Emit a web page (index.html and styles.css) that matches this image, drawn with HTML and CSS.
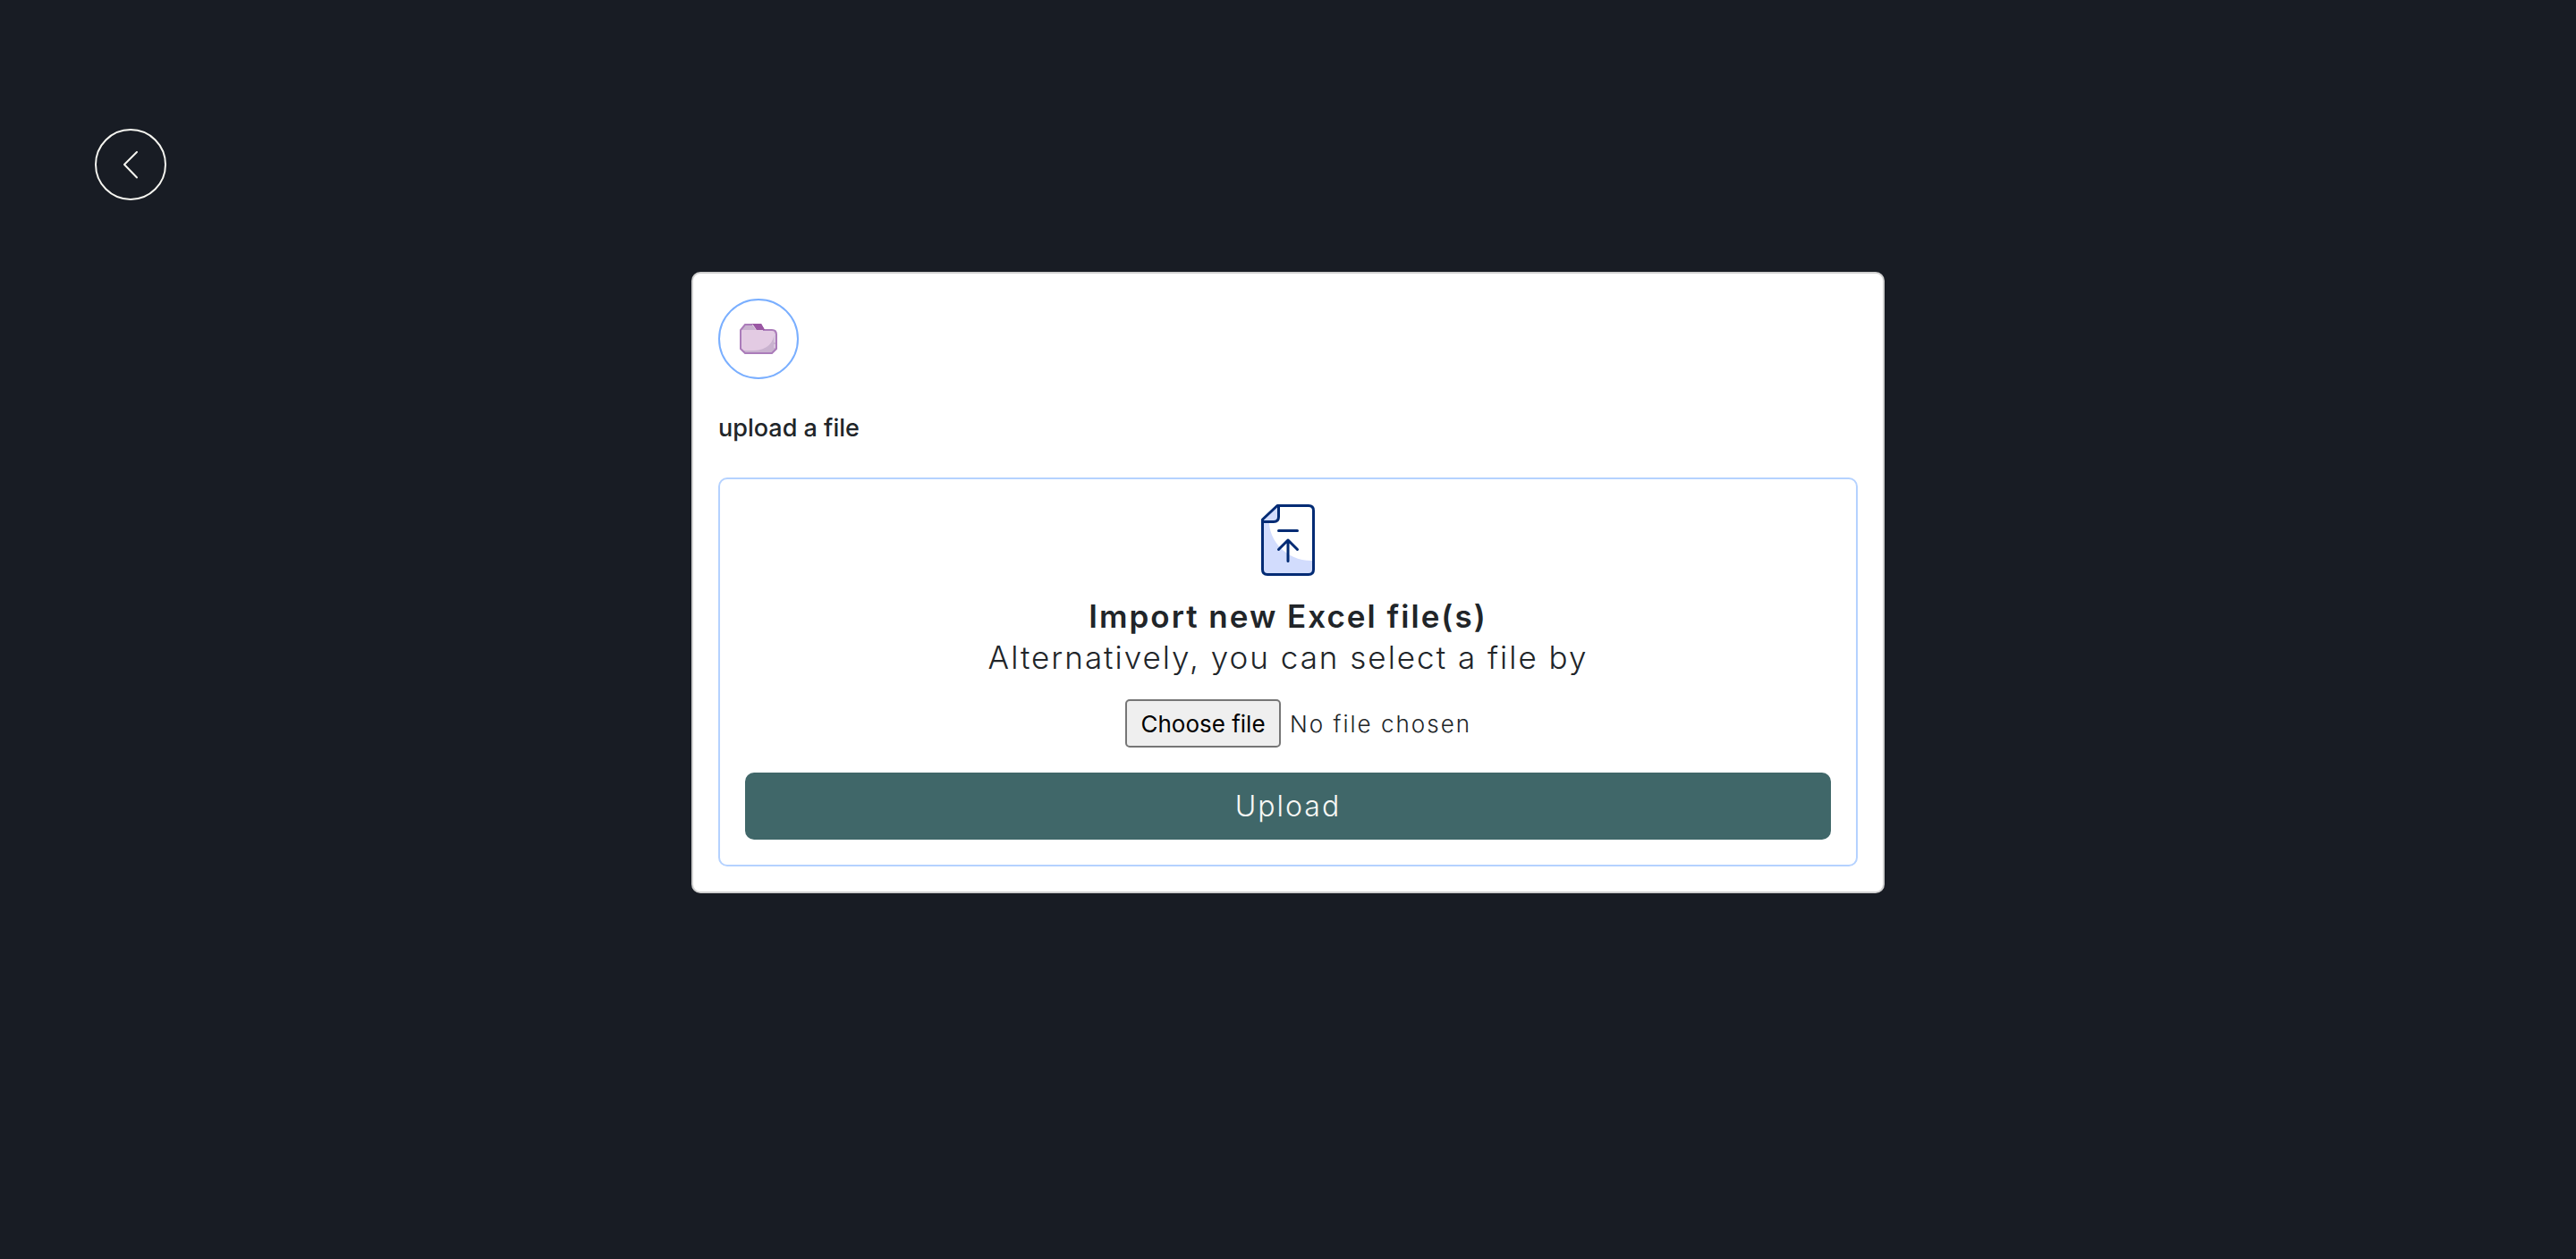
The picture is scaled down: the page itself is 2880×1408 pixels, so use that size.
FILE: index.html
```
<!DOCTYPE html>
<html lang="en">
<head>
<meta charset="utf-8">
<meta name="viewport" content="width=device-width, initial-scale=1">
<title>Upload a file</title>
<link rel="stylesheet" href="styles.css">
</head>
<body>
<header class="topbar">
  <button class="back" type="button" aria-label="Back">
    <svg width="80" height="80" viewBox="0 0 80 80" fill="none" stroke="#f5f5f0" stroke-width="2" stroke-linecap="round" stroke-linejoin="round" aria-hidden="true">
      <circle cx="40" cy="40" r="39"/>
      <path d="M47 26L33 40L47 54.500"/>
    </svg>
  </button>
</header>
<main class="page">
  <section class="card">
    <div class="badge">
      <svg width="42" height="34" viewBox="0 0 42 34" aria-hidden="true">
        <path d="M1 7L6 1H14L19 7H36Q41 7 41 12V28L36 33H6L1 28Z" fill="#e3cbe3"/>
        <path d="M1 7L6 1H14L18 7Z" fill="#c9b2cf"/>
        <path d="M39 8Q38 29 16 30H2L6 33H36L41 28V10Z" fill="#c9b2cf"/>
        <path d="M14 1H6L1 7V28L6 33H36L41 28V12Q41 7 36 7H26" fill="none" stroke="#ab7cba" stroke-width="2"/>
        <path d="M14 0H24L28 7H19Z" fill="#9a57a3"/>
        <path d="M13 0H24L28 7H19Q17 1 13 0Z" fill="#9a57a3"/>
        <path d="M39 11V21M39 23V27" stroke="#e9dcec" stroke-width="1"/>
      </svg>
    </div>
    <h1 class="title">upload a file</h1>
    <form class="dropzone">
      <svg class="doc" width="60" height="80" viewBox="0 0 60 80" aria-hidden="true">
        <path d="M9 20C9 40 28 64 58 63V78H2V20Z" fill="#d2dcfd"/>
        <path d="M2 17L18 2V20H2Z" fill="#d2dcfd"/>
        <g fill="none" stroke="#022b74" stroke-width="3" stroke-linecap="round" stroke-linejoin="round">
          <path d="M18 1.500H53Q58.500 1.500 58.500 7V73Q58.500 78.500 53 78.500H7Q1.500 78.500 1.500 73V17Z"/>
          <path d="M19.500 2V14Q19.500 19.500 14 19.500H2M19.500 29.500H40.500M30 63.500V40M19.500 50.500L30 40L40.500 50.500"/>
        </g>
      </svg>
      <h2 class="heading">Import new Excel file(s)</h2>
      <label class="hint" for="file">Alternatively, you can select a file by</label>
      <div class="picker">
        <span class="picker-button">Choose file</span>
        <span>No file chosen</span>
        <input class="picker-input" id="file" type="file">
      </div>
      <button class="upload" type="submit">Upload</button>
    </form>
  </section>
</main>
</body>
</html>
```
FILE: styles.css
```
* { box-sizing: border-box; }

body {
  margin: 0;
  background: #181c24;
  color: #212529;
  font-family: Inter, "Liberation Sans", sans-serif;
}

.topbar { padding: 144px 106px 80px; }

.back {
  display: block;
  padding: 0;
  border: 0;
  border-radius: 50%;
  background: none;
  cursor: pointer;
}

.back svg, .badge svg, .doc { display: block; }

.page { display: flex; justify-content: center; }

.card {
  width: 100%;
  max-width: 1334px;
  padding: 28px;
  border: 2px solid #d0d0d0;
  border-radius: 10px;
  background: #fff;
}

.badge {
  display: grid;
  place-items: center;
  width: 90px;
  height: 90px;
  border: 2px solid #7aafff;
  border-radius: 50%;
}

.title {
  margin: 38px 0;
  font-size: 27px;
  font-weight: 500;
  line-height: 34px;
}

.dropzone {
  display: flex;
  flex-direction: column;
  align-items: center;
  padding: 28px;
  border: 2px solid #b5d2ff;
  border-radius: 10px;
  letter-spacing: 2px;
}

.heading {
  margin: 22px 0 0;
  font-size: 35px;
  font-weight: 600;
  line-height: 46px;
}

.hint {
  font-size: 35px;
  font-weight: 300;
  line-height: 46px;
}

.picker {
  position: relative;
  display: flex;
  align-items: center;
  gap: 10px;
  width: 364px;
  margin: 24px 0 28px;
  font-size: 26px;
  font-weight: 300;
  white-space: nowrap;
}

.picker-button {
  flex: none;
  display: grid;
  place-items: center;
  width: 174px;
  height: 54px;
  border: 2px solid #767676;
  border-radius: 5px;
  background: #efefef;
  color: #000;
  font-weight: 400;
  letter-spacing: normal;
}

.picker-input {
  position: absolute;
  inset: 0;
  width: 100%;
  opacity: 0;
  cursor: pointer;
}

.upload {
  width: 100%;
  height: 75px;
  border: 0;
  border-radius: 10px;
  background: #406769;
  color: #f8f8f5;
  font: inherit;
  font-size: 32px;
  font-weight: 300;
  letter-spacing: 2px;
  cursor: pointer;
}
```
